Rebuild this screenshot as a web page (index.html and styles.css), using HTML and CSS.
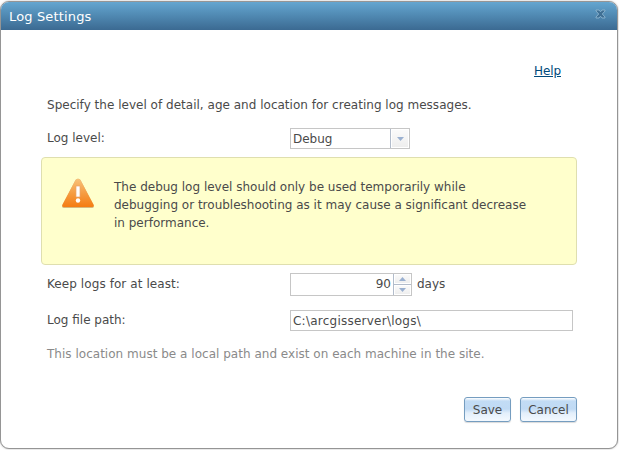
FILE: index.html
```html
<!DOCTYPE html>
<html lang="en">
<head>
<meta charset="utf-8">
<title>Log Settings</title>
<link rel="stylesheet" href="styles.css">
</head>
<body>
<div class="dialog">
  <div class="titlebar">
    <span class="title">Log Settings</span>
    <svg class="close" width="11" height="10" viewBox="0 0 11 10"><path d="M1 1h3l1.500 1.800L7 1h3v1L7.300 5 10 8v1H7L5.500 7.200 4 9H1V8l2.700-3L1 2z" fill="#3f6f94" stroke="#8db4cf" stroke-width=".9"/></svg>
  </div>
  <div class="content">
    <div class="help"><a href="#">Help</a></div>
    <p class="intro">Specify the level of detail, age and location for creating log messages.</p>
    <div class="row level">
      <label>Log level:</label>
      <div class="select"><span>Debug</span><i><svg width="7" height="4"><path d="M0 0h7L3.500 4z"/></svg></i></div>
    </div>
    <div class="warning">
      <svg width="34" height="31" viewBox="0 0 34 31">
        <defs><linearGradient id="w" x1="0" y1="0" x2="0" y2="1"><stop offset="0" stop-color="#f8c27a"/><stop offset=".55" stop-color="#f59a3e"/><stop offset="1" stop-color="#f57c12"/></linearGradient></defs>
        <path d="M14.500 2Q17-.7 19.500 2L32.500 27Q33.500 30 31 30H3Q.5 30 1.500 27z" fill="#b98b4d" opacity=".6"/>
        <path d="M14.500 2Q17-.5 19.500 2L32.500 26.500Q33.500 29 31 29H3Q.5 29 1.500 26.500z" fill="url(#w)"/>
        <path d="M15 8h4v11h-4z" fill="#fff" stroke="#e9a36b" stroke-width=".7"/>
        <circle cx="17" cy="22.500" r="2.200" fill="#fff"/>
      </svg>
      <p>The debug log level should only be used temporarily while<br>debugging or troubleshooting as it may cause a significant decrease<br>in performance.</p>
    </div>
    <div class="row keep">
      <label>Keep logs for at least:</label>
      <div class="spinner"><span>90</span><div class="arrows"><i><svg width="7" height="4"><path d="M0 4h7L3.500 0z"/></svg></i><i><svg width="7" height="4"><path d="M0 0h7L3.500 4z"/></svg></i></div></div>
      <span class="unit">days</span>
    </div>
    <div class="row path">
      <label>Log file path:</label>
      <div class="field"><span>C:\arcgisserver\logs\</span></div>
    </div>
    <p class="hint">This location must be a local path and exist on each machine in the site.</p>
    <div class="buttons"><button class="save">Save</button><button class="cancel">Cancel</button></div>
  </div>
</div>
</body>
</html>
```
FILE: styles.css
```css
* { box-sizing: border-box; }
body {
  margin: 0;
  height: 450px;
  overflow: hidden;
  background: #fff;
  color: #4a4a4a;
  font: 12px/18px Verdana, "DejaVu Sans", sans-serif;
}
p { margin: 0; }
i { display: flex; align-items: center; justify-content: center; background: linear-gradient(#fbfbfb, #ededed); }
i svg { fill: #9ab0d0; }
.dialog {
  width: 618px;
  height: 448px;
  margin-top: 1px;
  border: 1px solid #959595;
  border-radius: 9px;
  overflow: hidden;
  background: #fff;
  box-shadow: 0 0 2px #aaa;
}
.titlebar {
  display: flex;
  justify-content: space-between;
  height: 28px;
  padding: 6px 11px 0 8px;
  background: linear-gradient(#64a6d0, #3b6a92);
  color: #fff;
}
.title { font-size: 13px; letter-spacing: .15px; }
.close { margin-top: 1px; }
.content { padding: 32px 40px 0 46px; }
.help { padding-right: 16px; text-align: right; }
.help a { color: #00497a; letter-spacing: -.1px; }
.intro { margin-top: 16px; white-space: nowrap; letter-spacing: .015px; }
.row { display: flex; align-items: center; }
label { width: 243px; padding-bottom: 2px; }
.level { height: 21px; margin-top: 14px; }
.select, .spinner, .field { display: flex; border: 1px solid #c6c6c6; background: #fff; }
.select { width: 120px; height: 21px; }
.select span { flex: 1; padding: 1px 0 0 2px; }
.select i { width: 19px; border-left: 1px solid #b2bccb; box-shadow: inset 0 0 0 1px #fff; }
.warning {
  display: flex;
  width: 536px;
  height: 108px;
  margin: 8px 0 0 -6px;
  padding: 20px 0 0 19px;
  border: 1px solid #dfdfaf;
  border-radius: 4px;
  background: #ffc;
}
.warning p { margin-left: 19px; white-space: nowrap; }
.keep { height: 23px; margin-top: 8px; }
.keep label { letter-spacing: .08px; }
.spinner { width: 122px; height: 23px; }
.spinner span { flex: 1; padding: 1px 2px 0 0; text-align: right; }
.arrows { display: flex; flex-direction: column; width: 18px; border-left: 1px solid #b2bccb; }
.arrows i { flex: 1; box-shadow: inset 0 0 0 1px #fff; }
.arrows i + i { border-top: 1px solid #b2bccb; }
.unit { margin-left: 5px; padding-bottom: 1px; }
.path { height: 21px; margin-top: 14px; }
.field { width: 283px; height: 21px; padding: 1px 0 0 2px; letter-spacing: .24px; }
.hint { margin-top: 14px; color: #8a8a8a; white-space: nowrap; letter-spacing: .02px; }
.buttons { display: flex; justify-content: flex-end; gap: 9px; margin-top: 34px; }
button {
  height: 25px;
  padding: 0;
  border: 1px solid #759dc0;
  border-radius: 3px;
  background: linear-gradient(#fff 0, #c2dcf5 3px, #c0daf4 11px, #e3effb 15px, #f2f8fe 22px);
  box-shadow: 0 1px 1px rgba(0, 0, 0, .15);
  color: #4a4a4a;
  font: inherit;
}
.save { width: 47px; }
.cancel { width: 57px; }
```
